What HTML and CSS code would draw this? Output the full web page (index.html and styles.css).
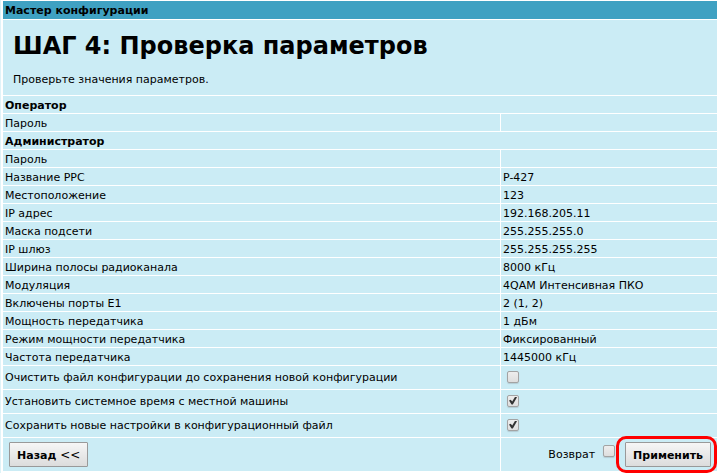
FILE: index.html
```html
<!DOCTYPE html>
<html lang="ru">
<head>
<meta charset="utf-8">
<title>Мастер конфигурации</title>
<link rel="stylesheet" href="styles.css">
</head>
<body>
<form class="wizard">
<table class="params">
<colgroup><col><col class="value-col"></colgroup>
<thead>
<tr><th class="title" colspan="2">Мастер конфигурации</th></tr>
</thead>
<tbody>
<tr><td class="intro" colspan="2"><h1>ШАГ 4: Проверка параметров</h1><p>Проверьте значения параметров.</p></td></tr>
<tr><th colspan="2">Оператор</th></tr>
<tr><td>Пароль</td><td></td></tr>
<tr><th colspan="2">Администратор</th></tr>
<tr><td>Пароль</td><td></td></tr>
<tr><td>Название РРС</td><td>P-427</td></tr>
<tr><td>Местоположение</td><td>123</td></tr>
<tr><td>IP адрес</td><td>192.168.205.11</td></tr>
<tr><td>Маска подсети</td><td>255.255.255.0</td></tr>
<tr><td>IP шлюз</td><td>255.255.255.255</td></tr>
<tr><td>Ширина полосы радиоканала</td><td>8000 кГц</td></tr>
<tr><td>Модуляция</td><td>4QAM Интенсивная ПКО</td></tr>
<tr><td>Включены порты E1</td><td>2 (1, 2)</td></tr>
<tr><td>Мощность передатчика</td><td>1 дБм</td></tr>
<tr><td>Режим мощности передатчика</td><td>Фиксированный</td></tr>
<tr><td>Частота передатчика</td><td>1445000 кГц</td></tr>
<tr class="option"><td><label for="clear">Очистить файл конфигурации до сохранения новой конфигурации</label></td><td><input type="checkbox" id="clear"></td></tr>
<tr class="option"><td><label for="time">Установить системное время с местной машины</label></td><td><input type="checkbox" id="time" checked></td></tr>
<tr class="option"><td><label for="save">Сохранить новые настройки в конфигурационный файл</label></td><td><input type="checkbox" id="save" checked></td></tr>
</tbody>
<tfoot>
<tr class="actions">
<td><button type="button">Назад <span class="arrows">&lt;&lt;</span></button></td>
<td><div class="apply"><label for="rollback">Возврат</label><input type="checkbox" id="rollback"><span class="highlight"><button type="submit">Применить</button></span></div></td>
</tr>
</tfoot>
</table>
</form>
</body>
</html>
```
FILE: styles.css
```css
* {
  box-sizing: border-box;
}

body {
  margin: 0;
  background: #fff;
  border-left: 1px solid #dff3f8;
  color: #000;
  font: 11px/15px Verdana, "DejaVu Sans", sans-serif;
}

.wizard {
  padding: 1px 0 2px 2px;
}

.params {
  width: 100%;
  table-layout: fixed;
  border-collapse: separate;
  border-spacing: 0;
}

.value-col {
  width: 217px;
}

th,
td {
  height: 18px;
  padding: 2px 2px 0;
  background: #cbecf5;
  border-bottom: 1px solid #fff;
  text-align: left;
  vertical-align: middle;
}

td + td {
  border-left: 1px solid #fff;
}

.title {
  height: 19px;
  padding-top: 1px;
  background: #3fa1c2;
}

.intro {
  height: 76px;
  padding: 1px 10px 0;
}

h1 {
  margin: 0;
  font-size: 24px;
  line-height: 32px;
}

p {
  margin: 10px 0 0;
}

.option td {
  height: 24px;
}

input {
  appearance: none;
  display: block;
  position: relative;
  width: 12px;
  height: 12px;
  margin: 0 4px;
  background: linear-gradient(#ededed, #dedede);
  border: 1px solid #a3a3a3;
  border-radius: 2px;
  box-shadow: 0 1px 1px #b3cdd4;
}

.option td {
  padding-top: 0;
}

.option td + td {
  padding-bottom: 2px;
}

input:checked::after {
  content: "";
  position: absolute;
  inset: 1px;
  background: #333;
  clip-path: polygon(0 50%, 22% 42%, 40% 62%, 78% 0, 100% 8%, 48% 100%, 32% 100%);
}

.actions td {
  height: 33px;
  padding: 0 6px;
  border-bottom: 0;
}

button {
  display: block;
  height: 25px;
  padding: 2px 7px 0;
  background: linear-gradient(#f6f6f6, #dcdcdc);
  border: 1px solid #999;
  border-radius: 1px;
  color: #000;
  font: bold 11px/20px Verdana, "DejaVu Sans", sans-serif;
}

.arrows {
  font-size: 12px;
  font-weight: normal;
}

.apply {
  display: flex;
  align-items: center;
  justify-content: flex-end;
}

.apply input {
  align-self: flex-start;
  margin: 3px 10px 0 8px;
}

.highlight {
  position: relative;
}

.highlight::after {
  content: "";
  position: absolute;
  inset: -6px -6px -6px -9px;
  border: 3px solid #f00;
  border-radius: 10px;
  pointer-events: none;
}
```
